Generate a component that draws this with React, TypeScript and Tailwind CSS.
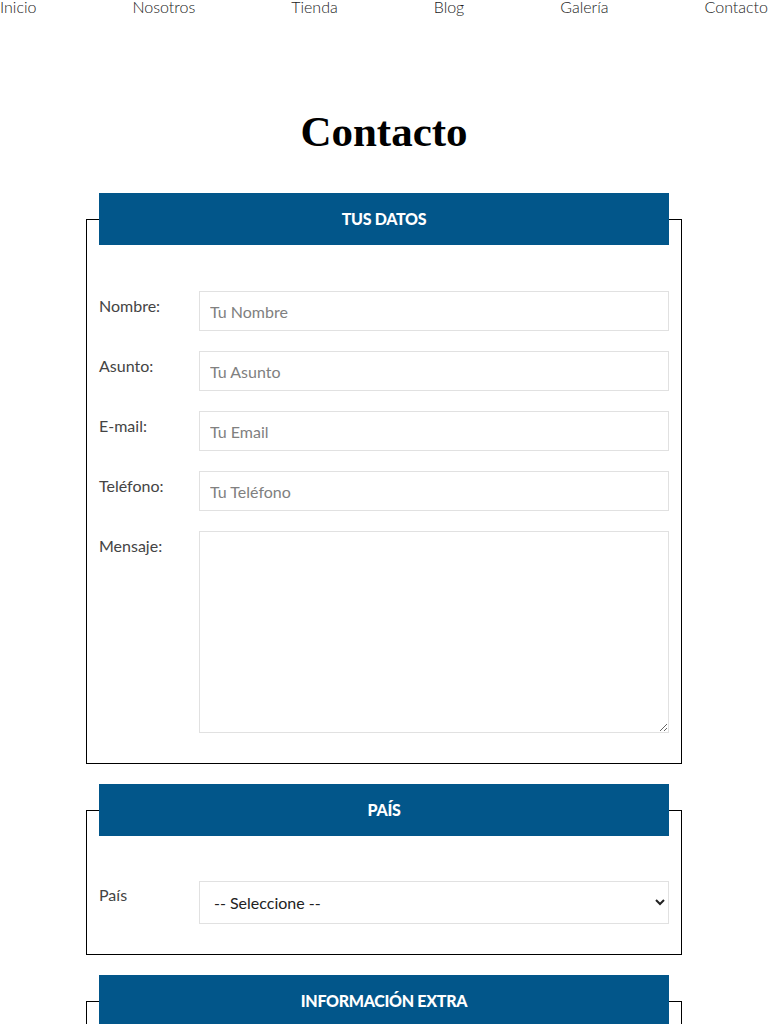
import React from "react";

const body = { fontFamily: "Lato, 'Noto Sans', sans-serif" };

function Row({ label, children, top = "pt-[3px]" }: { label: string; children: React.ReactNode; top?: string }) {
  return (
    <div className="flex">
      <label className={`w-[100px] shrink-0 text-[16px] leading-6 text-[#444] ${top}`}>{label}</label>
      <div className="flex-1">{children}</div>
    </div>
  );
}

const inputCls =
  "block w-full h-[40px] border border-[#e1e1e1] bg-white px-[10px] text-[16px] text-[#333] placeholder:text-[#808080] outline-none";

function Legend({ children }: { children: React.ReactNode }) {
  return (
    <legend className="w-full h-[52px] bg-[#02568a] flex items-center justify-center text-white text-[16px] font-black uppercase tracking-[-0.3px]">
      {children}
    </legend>
  );
}

export default function App() {
  return (
    <div className="bg-white min-h-[1024px] overflow-hidden" style={body}>
      <nav className="flex justify-between -mt-[5px] text-[16px] leading-6 font-light text-[#222]">
        <a>Inicio</a>
        <a>Nosotros</a>
        <a>Tienda</a>
        <a>Blog</a>
        <a>Galería</a>
        <a>Contacto</a>
      </nav>
      <h1
        className="mt-[86px] text-center text-[43px] leading-[53px] font-bold text-black"
        style={{ fontFamily: "'Liberation Serif', 'DejaVu Serif', serif" }}
      >
        Contacto
      </h1>
      <form className="mt-[35px] flex flex-col gap-[20px]">
        <fieldset className="mx-auto w-[596px] border border-black px-[12px] pb-[30px]">
          <Legend>Tus Datos</Legend>
          <div className="mt-[46px] flex flex-col gap-[20px]">
            <Row label="Nombre:">
              <input className={inputCls} placeholder="Tu Nombre" />
            </Row>
            <Row label="Asunto:">
              <input className={inputCls} placeholder="Tu Asunto" />
            </Row>
            <Row label="E-mail:">
              <input className={inputCls} placeholder="Tu Email" />
            </Row>
            <Row label="Teléfono:">
              <input className={inputCls} placeholder="Tu Teléfono" />
            </Row>
            <Row label="Mensaje:">
              <textarea className="block w-full h-[202px] border border-[#e1e1e1] bg-white px-[10px] py-2 text-[16px] outline-none" />
            </Row>
          </div>
        </fieldset>
        <fieldset className="mx-auto w-[596px] border border-black px-[12px] pb-[30px]">
          <Legend>País</Legend>
          <div className="mt-[45px]">
            <Row label="País" top="pt-[2px]">
              <select className="block w-full h-[43px] border border-[#e1e1e1] bg-white px-[10px] text-[16px] text-[#222] outline-none">
                <option>-- Seleccione --</option>
              </select>
            </Row>
          </div>
        </fieldset>
        <fieldset className="mx-auto w-[596px] border border-black px-[12px] pb-[30px]">
          <Legend>Información Extra</Legend>
          <div className="h-[120px]" />
        </fieldset>
      </form>
    </div>
  );
}
